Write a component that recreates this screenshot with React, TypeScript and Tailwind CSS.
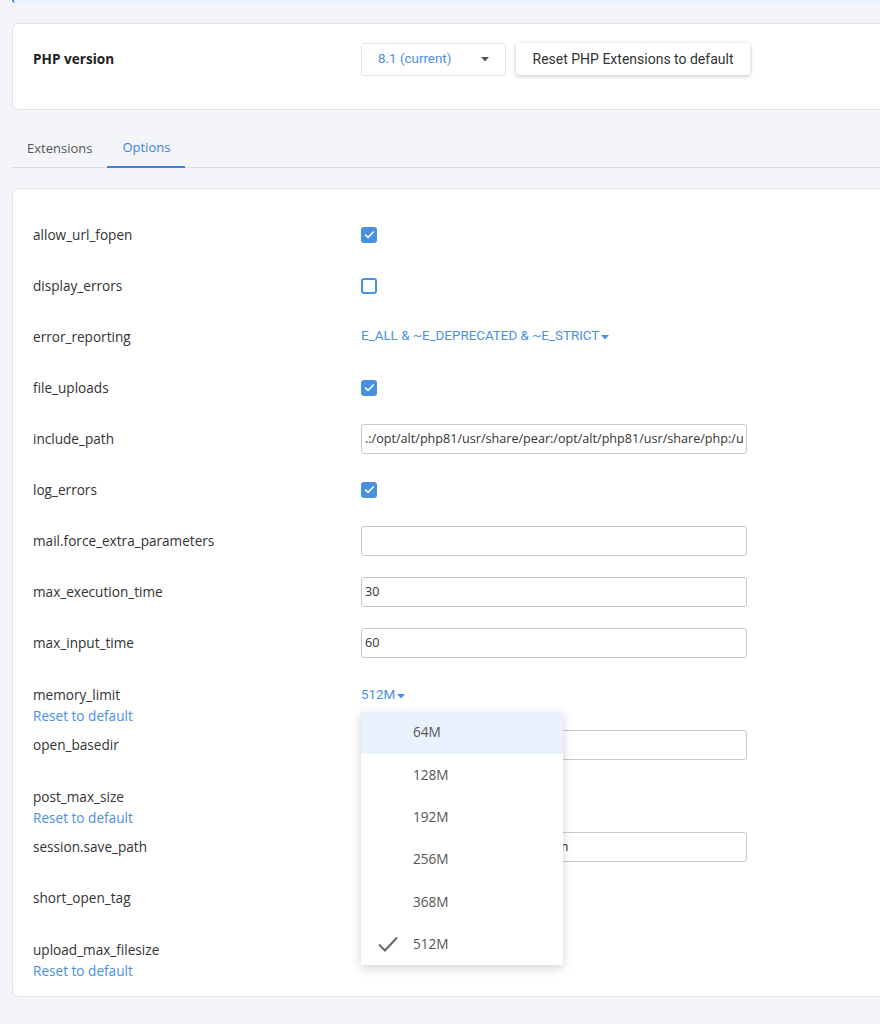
import React from "react";

type Opt =
  | { name: string; kind: "check"; on: boolean; reset?: boolean }
  | { name: string; kind: "text"; value: string; reset?: boolean }
  | { name: string; kind: "select"; value: string; reset?: boolean; open?: boolean };

const options: Opt[] = [
  { name: "allow_url_fopen", kind: "check", on: true },
  { name: "display_errors", kind: "check", on: false },
  { name: "error_reporting", kind: "select", value: "E_ALL & ~E_DEPRECATED & ~E_STRICT" },
  { name: "file_uploads", kind: "check", on: true },
  { name: "include_path", kind: "text", value: ".:/opt/alt/php81/usr/share/pear:/opt/alt/php81/usr/share/php:/usr/share/pear:/usr/share/php" },
  { name: "log_errors", kind: "check", on: true },
  { name: "mail.force_extra_parameters", kind: "text", value: "" },
  { name: "max_execution_time", kind: "text", value: "30" },
  { name: "max_input_time", kind: "text", value: "60" },
  { name: "memory_limit", kind: "select", value: "512M", reset: true, open: true },
  { name: "open_basedir", kind: "text", value: "" },
  { name: "post_max_size", kind: "select", value: "512M", reset: true },
  { name: "session.save_path", kind: "text", value: "/opt/alt/php81/var/lib/php/session" },
  { name: "short_open_tag", kind: "check", on: true },
  { name: "upload_max_filesize", kind: "select", value: "512M", reset: true },
];

const sizes = ["64M", "128M", "192M", "256M", "368M", "512M"];

const Caret = ({ className }: { className: string }) => (
  <svg width="8" height="5" viewBox="0 0 8 5" className={className}>
    <path d="M0 0h8L4 4.5z" fill="currentColor" />
  </svg>
);

const Checkbox = ({ on }: { on: boolean }) =>
  on ? (
    <span className="flex h-4 w-4 items-center justify-center rounded-[3px] bg-[#4a90e2]">
      <svg width="11" height="9" viewBox="0 0 11 9">
        <path d="M1.2 4.6l2.8 2.8L9.8 1.4" fill="none" stroke="#fff" strokeWidth="1.5" />
      </svg>
    </span>
  ) : (
    <span className="block h-4 w-4 rounded-[3px] border-2 border-[#4a90e2] bg-white" />
  );

const SizeMenu = () => (
  <div className="absolute left-0 top-[26px] z-10 w-[202px] bg-white shadow-[0_3px_10px_rgba(0,0,0,0.18)]">
    {sizes.map((s, i) => (
      <div
        key={s}
        className={`flex h-[42.33px] items-center font-['Open_Sans'] text-[13.6px] text-[#555] ${i === 0 ? "bg-[#e9f1fd]" : ""}`}
      >
        <span className="flex w-[52px] justify-center pl-[2px]">
          {s === "512M" && (
            <svg width="22" height="18" viewBox="0 0 22 18">
              <path d="M2 9.5l6 6L20 2.5" fill="none" stroke="#666" strokeWidth="2" />
            </svg>
          )}
        </span>
        {s}
      </div>
    ))}
  </div>
);

const Value = ({ opt }: { opt: Opt }) => {
  if (opt.kind === "check") return <Checkbox on={opt.on} />;
  if (opt.kind === "text")
    return (
      <input
        readOnly
        value={opt.value}
        className="h-[30px] w-[386px] rounded-[3px] border border-[#c9c9c9] bg-white px-[3px] font-['Open_Sans'] text-[12.6px] text-[#333] outline-none"
      />
    );
  return (
    <div className="relative inline-flex h-5 items-center gap-[2px] font-['Roboto'] text-[13.4px] text-[#4a90e2]">
      {opt.value}
      <Caret className="mt-[1px]" />
      {opt.open && <SizeMenu />}
    </div>
  );
};

export default function App() {
  return (
    <div className="min-h-[1024px] overflow-hidden bg-[#f4f5f9] pl-3 font-['Open_Sans',sans-serif] text-[13.6px] text-[#333]">
      {/* tail of the notice above */}
      <div className="-mr-4 h-[3px] rounded-bl-[3px] border-l-2 border-[#3d8cf0] bg-[#e8f2fd]" />

      {/* PHP version card */}
      <div className="-mr-4 mt-5 flex h-[87px] items-start rounded-md border border-[#e2e3e8] bg-white pl-[20px] pt-[19px]">
        <div className="flex h-[33px] w-[328px] items-center font-bold text-[#222]">PHP version</div>
        <div className="flex h-[33px] w-[145px] items-center justify-between rounded-[3px] border border-[#e3e4e8] pl-4 pr-[16px] font-['Roboto'] text-[13.4px] text-[#4a90e2]">
          8.1 (current)
          <Caret className="text-[#555]" />
        </div>
        <button className="ml-[10px] h-8 w-[234px] rounded-[3px] bg-white font-['Roboto'] text-[14px] text-[#333] shadow-[0_1px_4px_rgba(0,0,0,0.25)]">
          Reset PHP Extensions to default
        </button>
      </div>

      {/* tabs */}
      <div className="-mr-4 mt-[18px] flex h-10 border-b border-[#dedfe3] text-[13px]">
        <div className="flex items-center px-[15px] pt-[2px] text-[#555]">Extensions</div>
        <div className="-mb-px flex items-center border-b-2 border-[#3d7fe0] px-[15px] pt-[2px] text-[#3d7fe0]">Options</div>
      </div>

      {/* options card */}
      <div className="-mr-4 mt-5 rounded-md border border-[#e2e3e8] bg-white pb-[22px] pl-[20px] pt-[20px]">
        {options.map((o) => (
          <div key={o.name} className={`flex h-[51px] items-center ${o.reset ? "pt-1" : ""}`}>
            <div className="w-[328px]">
              <div className="leading-5">{o.name}</div>
              {o.reset && (
                <div className="h-0">
                  <div className="mt-[1px] leading-5 text-[#4a90e2]">Reset to default</div>
                </div>
              )}
            </div>
            <Value opt={o} />
          </div>
        ))}
      </div>
    </div>
  );
}
